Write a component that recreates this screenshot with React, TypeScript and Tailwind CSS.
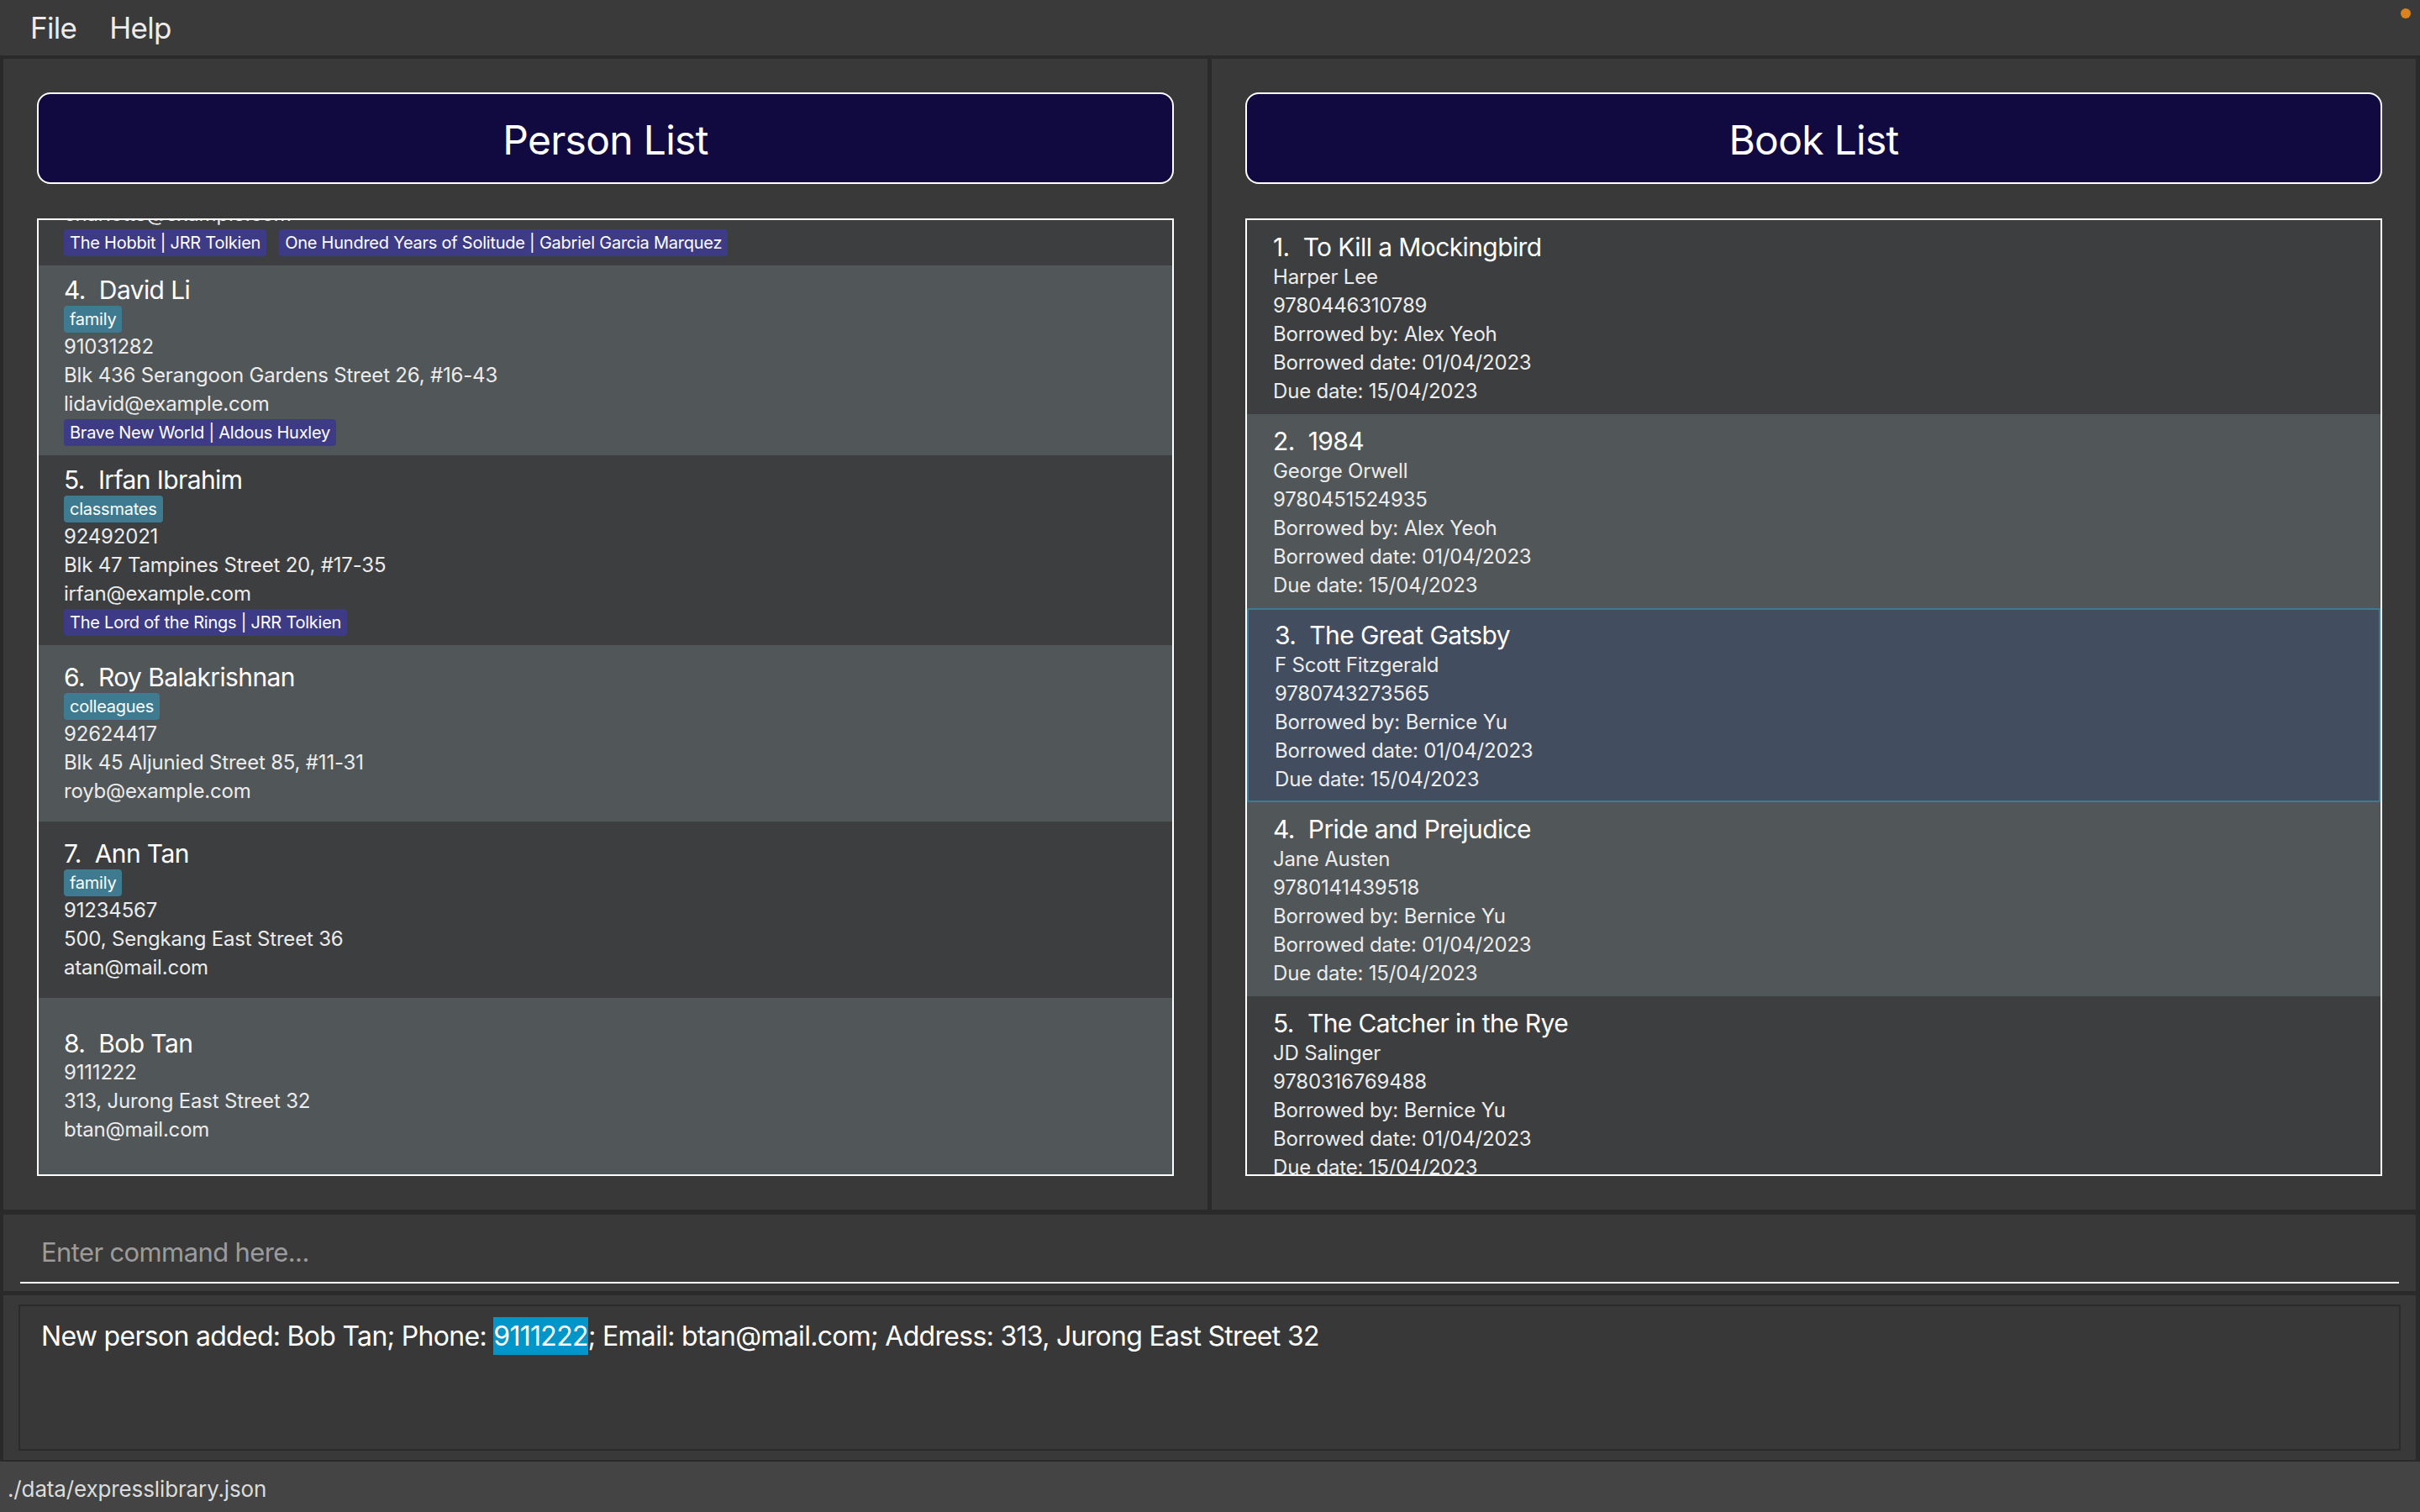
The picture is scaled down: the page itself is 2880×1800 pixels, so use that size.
type Person = {
  id: number;
  name: string;
  phone: string;
  address: string;
  email: string;
  tags: string[];
  books: string[];
};

type Book = {
  id: number;
  title: string;
  author: string;
  isbn: string;
  borrower: string;
};

const persons: Person[] = [
  {
    id: 3,
    name: "Charlotte Oliveiro",
    phone: "93210283",
    address: "Blk 11 Ang Mo Kio Street 74, #11-04",
    email: "charlotte@example.com",
    tags: ["neighbours"],
    books: ["The Hobbit | JRR Tolkien", "One Hundred Years of Solitude | Gabriel Garcia Marquez"],
  },
  {
    id: 4,
    name: "David Li",
    phone: "91031282",
    address: "Blk 436 Serangoon Gardens Street 26, #16-43",
    email: "lidavid@example.com",
    tags: ["family"],
    books: ["Brave New World | Aldous Huxley"],
  },
  {
    id: 5,
    name: "Irfan Ibrahim",
    phone: "92492021",
    address: "Blk 47 Tampines Street 20, #17-35",
    email: "irfan@example.com",
    tags: ["classmates"],
    books: ["The Lord of the Rings | JRR Tolkien"],
  },
  {
    id: 6,
    name: "Roy Balakrishnan",
    phone: "92624417",
    address: "Blk 45 Aljunied Street 85, #11-31",
    email: "royb@example.com",
    tags: ["colleagues"],
    books: [],
  },
  {
    id: 7,
    name: "Ann Tan",
    phone: "91234567",
    address: "500, Sengkang East Street 36",
    email: "atan@mail.com",
    tags: ["family"],
    books: [],
  },
  {
    id: 8,
    name: "Bob Tan",
    phone: "9111222",
    address: "313, Jurong East Street 32",
    email: "btan@mail.com",
    tags: [],
    books: [],
  },
];

const books: Book[] = [
  { id: 1, title: "To Kill a Mockingbird", author: "Harper Lee", isbn: "9780446310789", borrower: "Alex Yeoh" },
  { id: 2, title: "1984", author: "George Orwell", isbn: "9780451524935", borrower: "Alex Yeoh" },
  { id: 3, title: "The Great Gatsby", author: "F Scott Fitzgerald", isbn: "9780743273565", borrower: "Bernice Yu" },
  { id: 4, title: "Pride and Prejudice", author: "Jane Austen", isbn: "9780141439518", borrower: "Bernice Yu" },
  { id: 5, title: "The Catcher in the Rye", author: "JD Salinger", isbn: "9780316769488", borrower: "Bernice Yu" },
];

const SELECTED_BOOK = 3;

const Panel = ({ title, children }: { title: string; children: React.ReactNode }) => (
  <div className="bg-[#393939] p-[40px] flex flex-col gap-[41px] min-h-0">
    <div className="h-[109px] shrink-0 rounded-[16px] border-2 border-white bg-[#100a40] flex items-center justify-center pt-[4px]">
      <span className="text-[48px] tracking-[-0.015em] text-white">{title}</span>
    </div>
    <div className="flex-1 min-h-0 border-2 border-white bg-[#3c3e3f] overflow-hidden">{children}</div>
  </div>
);

// this card sits partly above the top edge of the list, as if scrolled
const PersonCard = ({ person, scrolled }: { person: Person; scrolled: boolean }) => {
  const bg = person.id % 2 === 0 ? "bg-[#515658]" : "bg-[#3c3e3f]";
  return (
    <div
      className={`min-h-[210px] py-[11px] px-[30px] flex flex-col justify-center text-[#ececec] tracking-[-0.012em] ${bg} ${
        scrolled ? "mt-[-172px]" : ""
      }`}
    >
      <div className="flex text-[30px] leading-[36px] tracking-[-0.02em] text-white">
        <span>{person.id}.</span>
        <span className="ml-[16px]">{person.name}</span>
      </div>
      {person.tags.length > 0 && (
        <div className="mt-[1px] flex gap-[14px]">
          {person.tags.map((t) => (
            <span
              key={t}
              className="h-[32px] px-[7px] rounded-[4px] bg-[#3e7b91] text-[20px] leading-[32px] tracking-[-0.012em] text-white"
            >
              {t}
            </span>
          ))}
        </div>
      )}
      <div className="text-[24px] leading-[34px]">{person.phone}</div>
      <div className="text-[24px] leading-[34px]">{person.address}</div>
      <div className="text-[24px] leading-[34px]">{person.email}</div>
      {person.books.length > 0 && (
        <div className="mt-[1px] flex gap-[15px]">
          {person.books.map((b) => (
            <span
              key={b}
              className="h-[32px] px-[7px] rounded-[4px] bg-[#3d3b86] text-[20px] leading-[32px] tracking-[-0.012em] text-white"
            >
              {b}
            </span>
          ))}
        </div>
      )}
    </div>
  );
};

const BookCard = ({ book }: { book: Book }) => {
  const selected = book.id === SELECTED_BOOK;
  const bg = selected
    ? "bg-[#424d5f] border-2 border-[#3e7b91] pt-[12px] pb-[8px]"
    : book.id % 2 === 0
    ? "bg-[#515658] pt-[14px] pb-[10px]"
    : "bg-[#3c3e3f] pt-[14px] pb-[10px]";
  return (
    <div className={`px-[31px] text-[#ececec] tracking-[-0.012em] ${bg}`}>
      <div className="flex text-[30px] leading-[37px] tracking-[-0.02em] text-white">
        <span>{book.id}.</span>
        <span className="ml-[16px]">{book.title}</span>
      </div>
      <div className="text-[24px] leading-[34px]">{book.author}</div>
      <div className="text-[24px] leading-[34px]">{book.isbn}</div>
      <div className="text-[24px] leading-[34px]">Borrowed by: {book.borrower}</div>
      <div className="text-[24px] leading-[34px]">Borrowed date: 01/04/2023</div>
      <div className="text-[24px] leading-[34px]">Due date: 15/04/2023</div>
    </div>
  );
};

export default function App() {
  return (
    <div className="h-screen w-full flex flex-col bg-[#2a2a2a] overflow-hidden font-[family-name:Inter,sans-serif]">
      {/* menu bar */}
      <div className="h-[66px] shrink-0 bg-[#3a3a3a] flex items-start justify-between">
        <div className="h-full flex items-center gap-[39px] pl-[36px] text-[35px] tracking-[-0.02em] text-[#ececec]">
          <span>File</span>
          <span>Help</span>
        </div>
        <div className="mt-[10px] mr-[11px] w-[12px] h-[12px] rounded-full bg-[#d9821e]" />
      </div>

      {/* lists */}
      <div className="mt-[4px] h-[1370px] shrink-0 grid grid-cols-2 gap-[5px] pl-[4px] pr-[5px]">
        <Panel title="Person List">
          {persons.map((p, i) => (
            <PersonCard key={p.id} person={p} scrolled={i === 0} />
          ))}
        </Panel>
        <Panel title="Book List">
          {books.map((b) => (
            <BookCard key={b.id} book={b} />
          ))}
        </Panel>
      </div>

      {/* command box */}
      <div className="mt-[6px] h-[91px] shrink-0 ml-[4px] mr-[5px] bg-[#393939] px-[20px] pt-[10px]">
        <div className="h-[72px] border-b-2 border-white flex items-center pl-[25px] text-[31px] tracking-[-0.02em] text-[#9c9c9c]">
          Enter command here...
        </div>
      </div>

      {/* result display */}
      <div className="mt-[5px] h-[196px] shrink-0 ml-[4px] mr-[5px] bg-[#393939] px-[18px] py-[11px]">
        <div className="h-full border-2 border-[#2b2b2b] bg-[#383838] pl-[25px] pt-[12px] text-[32px] tracking-[-0.022em] text-white">
          New person added: Bob Tan; Phone: <span className="bg-[#0096c9] py-[3px]">9111222</span>; Email: btan@mail.com;
          Address: 313, Jurong East Street 32
        </div>
      </div>

      {/* status bar */}
      <div className="mt-[2px] flex-1 bg-[#444444] flex items-center pt-[5px] pl-[9px] text-[26px] tracking-[-0.005em] text-[#dcdcdc]">
        ./data/expresslibrary.json
      </div>
    </div>
  );
}
